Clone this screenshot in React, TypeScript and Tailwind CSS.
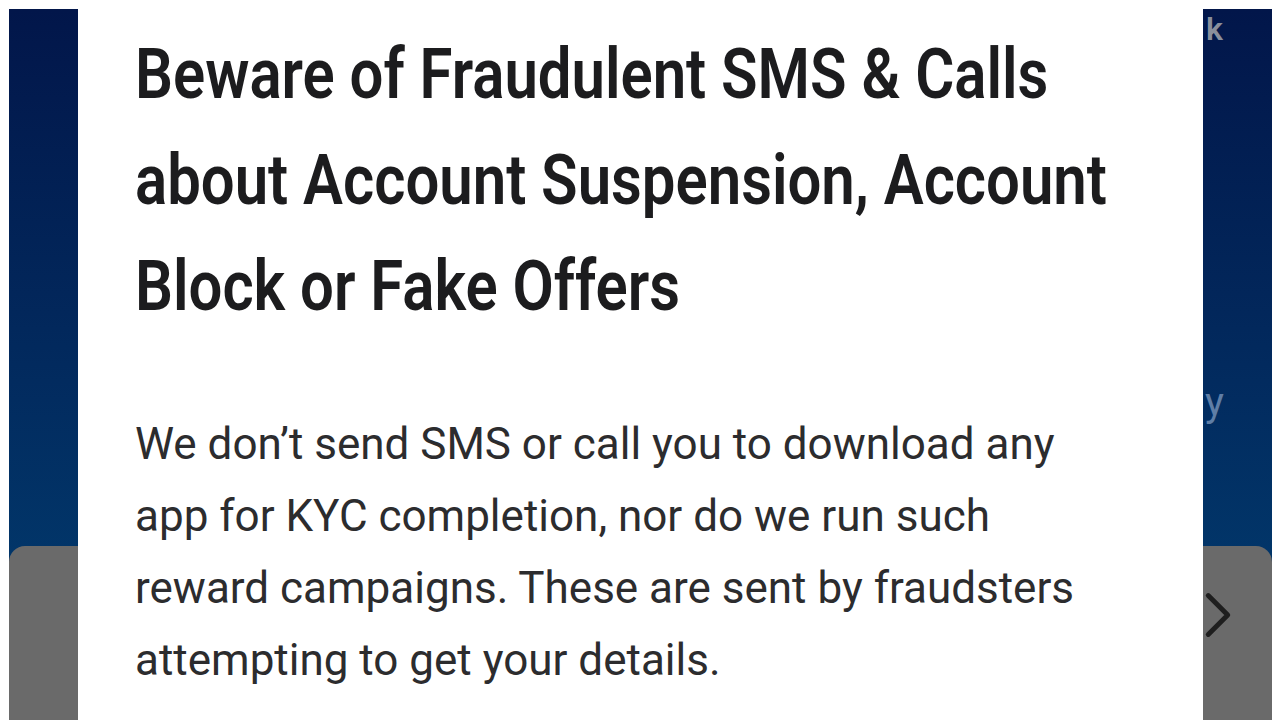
import { ChevronRight } from "lucide-react";

const heading = [
    "Beware of Fraudulent SMS & Calls",
    "about Account Suspension, Account",
    "Block or Fake Offers",
];

const body = [
    "We don\u2019t send SMS or call you to download any",
    "app for KYC completion, nor do we run such",
    "reward campaigns. These are sent by fraudsters",
    "attempting to get your details.",
];

function SideStrip({ side }: { side: "left" | "right" }) {
    return (
        <div className="relative w-[69px] h-full flex flex-col bg-gradient-to-b from-[#02164a] via-[#022a5e] to-[#013f72]">
            {side === "right" && (
                <>
                    <span className="absolute left-[3px] top-[4px] text-[32px] leading-[32px] font-semibold text-[#8a8f9c] [font-family:Roboto,sans-serif]">k</span>
                    <span className="absolute left-[2px] top-[364px] text-[40px] text-[#5f7ea6] [font-family:Roboto,sans-serif]">y</span>
                </>
            )}
            <div className="h-[537px] shrink-0" />
            <div
                className={
                    side === "left"
                        ? "flex-1 bg-[#6a6a6a] rounded-tl-[16px]"
                        : "flex-1 bg-[#6a6a6a] rounded-tr-[16px] flex items-start pt-[30px]"
                }
            >
                {side === "right" && (
                    <ChevronRight size={78} strokeWidth={1.5} className="shrink-0 text-[#1e1e1e] -ml-[24px]" />
                )}
            </div>
        </div>
    );
}

export default function App() {
    return (
        <div className="w-[1280px] h-[720px] bg-white flex pt-[9px] pl-[9px] pr-[8px] overflow-hidden">
            <SideStrip side="left" />

            {/* Card */}
            <div className="flex-1 bg-white pl-[57px] pt-[12px] overflow-hidden">
                <div className="origin-top-left scale-x-[0.855] w-[1300px] [font-family:Roboto,sans-serif]">
                    {heading.map((line) => (
                        <div key={line} className="text-[70px] leading-[106px] font-semibold text-[#1c1c1e] whitespace-nowrap">
                            {line}
                        </div>
                    ))}
                </div>
                <div className="w-[1100px] mt-[69px] [font-family:Roboto,sans-serif]">
                    {body.map((line) => (
                        <div key={line} className="text-[44px] leading-[72px] text-[#2c2c2e] whitespace-nowrap">
                            {line}
                        </div>
                    ))}
                </div>
            </div>

            <SideStrip side="right" />
        </div>
    );
}
